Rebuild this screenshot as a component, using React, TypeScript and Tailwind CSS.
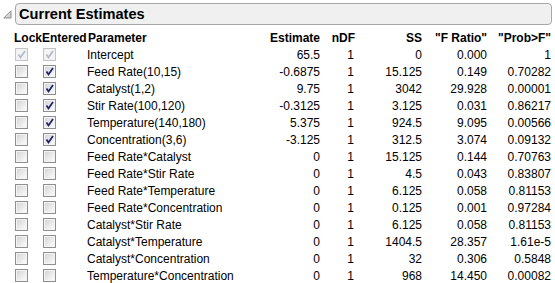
const rows: [string, string, string, string, string, string, 'dis' | 'on' | 'off'][] = [
  ['Intercept', '65.5', '1', '0', '0.000', '1', 'dis'],
  ['Feed Rate(10,15)', '-0.6875', '1', '15.125', '0.149', '0.70282', 'on'],
  ['Catalyst(1,2)', '9.75', '1', '3042', '29.928', '0.00001', 'on'],
  ['Stir Rate(100,120)', '-0.3125', '1', '3.125', '0.031', '0.86217', 'on'],
  ['Temperature(140,180)', '5.375', '1', '924.5', '9.095', '0.00566', 'on'],
  ['Concentration(3,6)', '-3.125', '1', '312.5', '3.074', '0.09132', 'on'],
  ['Feed Rate*Catalyst', '0', '1', '15.125', '0.144', '0.70763', 'off'],
  ['Feed Rate*Stir Rate', '0', '1', '4.5', '0.043', '0.83807', 'off'],
  ['Feed Rate*Temperature', '0', '1', '6.125', '0.058', '0.81153', 'off'],
  ['Feed Rate*Concentration', '0', '1', '0.125', '0.001', '0.97284', 'off'],
  ['Catalyst*Stir Rate', '0', '1', '6.125', '0.058', '0.81153', 'off'],
  ['Catalyst*Temperature', '0', '1', '1404.5', '28.357', '1.61e-5', 'off'],
  ['Catalyst*Concentration', '0', '1', '32', '0.306', '0.5848', 'off'],
  ['Temperature*Concentration', '0', '1', '968', '14.450', '0.00082', 'off'],
];

function Box({ checked, disabled }: { checked?: boolean; disabled?: boolean }) {
  return (
    <div className={`relative w-[13px] h-[13px] border ${disabled ? 'border-[#c4c4c4]' : 'border-[#8f8f8f]'}`}>
      <div className={`absolute inset-0 border ${disabled ? 'border-[#f2f2f2] bg-[#f4f4f4]' : 'border-[#f4f4f4] bg-gradient-to-br from-[#d6d6d6] to-[#fbfbfb]'}`} />
      {checked && (
        <svg className="absolute left-0 top-0" width="11" height="11" viewBox="0 0 11 11">
          <path d="M2.5 5.5 L4.5 8.5 L9 2" fill="none" stroke={disabled ? '#b4b8cc' : '#22226e'} strokeWidth="1.8" />
        </svg>
      )}
    </div>
  );
}

const grid = 'grid grid-cols-[30px_45px_175px_58px_35px_67px_65px_64px] h-[17px] items-center';

export default function App() {
  return (
    <div className="w-[555px] h-[283px] bg-white overflow-hidden text-black text-[12px] leading-none" style={{ fontFamily: '"Liberation Sans", Arial, sans-serif' }}>
      {/* Title */}
      <div className="flex items-center pt-[3px] pl-[3px] pr-[3px]">
        <svg width="9" height="9" viewBox="0 0 9 9" className="mr-[3px] mt-[1px]">
          <defs>
            <linearGradient id="tri" x1="0" y1="0" x2="1" y2="1">
              <stop offset="0" stopColor="#f4f4f4" />
              <stop offset="1" stopColor="#c8c8c8" />
            </linearGradient>
          </defs>
          <path d="M8 0.8 L8 8 L0.8 8 Z" fill="url(#tri)" stroke="#8a8a8a" strokeWidth="1" strokeLinejoin="round" />
        </svg>
        <div className="flex-1 h-[22px] rounded-[4px] border border-[#a8a8a8] bg-[#f0f0f0] flex items-center pl-[3px]">
          <span className="font-bold text-[14.6px]">Current Estimates</span>
        </div>
      </div>

      {/* Table */}
      <div className="pl-[12px] mt-[4px]">
        <div className={`${grid} font-bold`}>
          <div className="pl-[2px]">Lock</div>
          <div>Entered</div>
          <div className="pl-[1px]">Parameter</div>
          <div className="text-right">Estimate</div>
          <div className="text-right">nDF</div>
          <div className="text-right">SS</div>
          <div className="text-right">"F Ratio"</div>
          <div className="text-right">"Prob&gt;F"</div>
        </div>
        {rows.map(([name, est, ndf, ss, f, p, st]) => (
          <div key={name} className={grid}>
            <div className="pl-[3px]"><Box disabled={st === 'dis'} checked={st === 'dis'} /></div>
            <div className="pl-[1px]"><Box disabled={st === 'dis'} checked={st !== 'off'} /></div>
            <div>{name}</div>
            <div className="text-right">{est}</div>
            <div className="text-right pr-[1px]">{ndf}</div>
            <div className="text-right">{ss}</div>
            <div className="text-right">{f}</div>
            <div className="text-right">{p}</div>
          </div>
        ))}
      </div>
    </div>
  );
}
